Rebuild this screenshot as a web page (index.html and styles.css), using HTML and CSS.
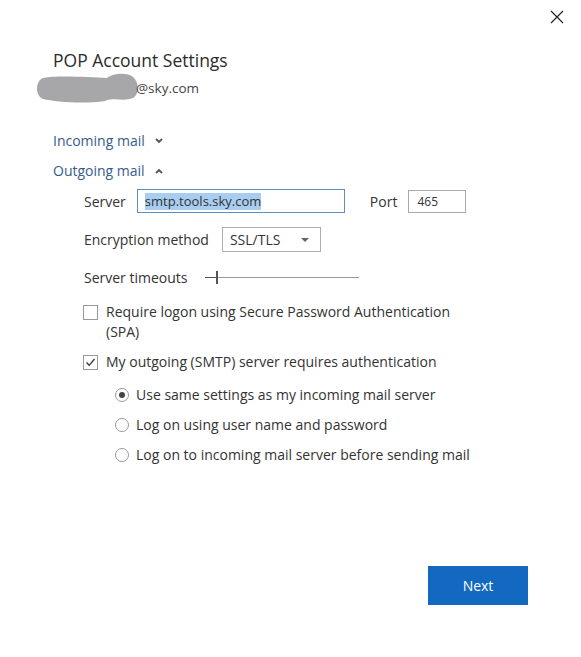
FILE: index.html
```html
<!DOCTYPE html>
<html>
<head>
<meta charset="utf-8">
<link rel="stylesheet" href="styles.css">
</head>
<body>
<div class="dialog">
  <div class="topbar">
    <svg class="close" width="14" height="14" viewBox="0 0 14 14"><path d="M1 1 L13 13 M13 1 L1 13" stroke="#222" stroke-width="1.2" fill="none"/></svg>
  </div>
  <div class="content">
    <h1 class="title">POP Account Settings</h1>
    <div class="email">
      <svg class="blob" width="104" height="30" viewBox="0 0 104 30"><path d="M8 5 C20 2 55 4 72 5 C78 0 92 -1 98 4 C104 9 105 21 98 25 C88 29 80 24 70 28 C50 31 20 29 8 26 C0 23 0 8 8 5 Z" fill="#a7a7a9"/></svg>
      <span class="domain">@sky.com</span>
    </div>
    <div class="section-link">Incoming mail <svg class="chev" width="8" height="6" viewBox="0 0 8 6"><path d="M1 1 L4 4 L7 1" stroke="#555" stroke-width="1.8" fill="none"/></svg></div>
    <div class="section-link second">Outgoing mail <svg class="chev" width="8" height="6" viewBox="0 0 8 6"><path d="M1 5 L4 2 L7 5" stroke="#555" stroke-width="1.8" fill="none"/></svg></div>

    <div class="form">
      <div class="row server-row">
        <span class="label">Server</span>
        <div class="input server-input"><span class="sel">smtp.tools.sky.com</span></div>
        <span class="label port-label">Port</span>
        <div class="input port-input">465</div>
      </div>
      <div class="row enc-row">
        <span class="label">Encryption method</span>
        <div class="select"><span>SSL/TLS</span><svg width="10" height="6" viewBox="0 0 10 6"><path d="M1 1 L9 1 L5 5 Z" fill="#666"/></svg></div>
      </div>
      <div class="row timeout-row">
        <span class="label">Server timeouts</span>
        <div class="slider"><span class="track-left"></span><span class="thumb"></span><span class="track"></span></div>
      </div>
      <div class="check first">
        <span class="box"></span>
        <span class="ctext">Require logon using Secure Password Authentication<br>(SPA)</span>
      </div>
      <div class="check checked">
        <span class="box"><svg width="13" height="13" viewBox="0 0 13 13"><path d="M2.5 6.5 L5.2 9.3 L10.5 3" stroke="#333" stroke-width="1.3" fill="none"/></svg></span>
        <span class="ctext">My outgoing (SMTP) server requires authentication</span>
      </div>
      <div class="radios">
        <div class="radio on"><span class="circle"><span class="dot"></span></span>Use same settings as my incoming mail server</div>
        <div class="radio"><span class="circle"></span>Log on using user name and password</div>
        <div class="radio"><span class="circle"></span>Log on to incoming mail server before sending mail</div>
      </div>
    </div>
  </div>
  <div class="footer">
    <button class="next">Next</button>
  </div>
</div>
</body>
</html>
```
FILE: styles.css
```css
html, body {
  margin: 0;
  padding: 0;
  background: #fff;
}
body {
  font-family: "Open Sans", "Noto Sans", sans-serif;
  color: #333;
  width: 581px;
  height: 657px;
  overflow: hidden;
}
.dialog {
  display: flex;
  flex-direction: column;
  height: 657px;
}
.topbar {
  display: flex;
  justify-content: flex-end;
  padding: 10px 17px 0 0;
  height: 14px;
}
.close { display: block; }
.content {
  padding-left: 53px;
}
.title {
  margin: 24px 0 0 0;
  font-weight: 400;
  font-size: 17.5px;
  line-height: 24px;
  color: #2b2b2b;
}
.email {
  display: flex;
  align-items: center;
  margin-left: -18px;
  height: 30px;
  margin-top: 1px;
}
.blob { display: block; }
.domain {
  font-size: 13.5px;
  color: #444;
  margin-left: -3px;
  margin-top: 0;
}
.section-link {
  margin-top: 28px;
  font-size: 14px;
  line-height: 20px;
  color: #365c8b;
  display: flex;
  align-items: center;
}
.section-link.second { margin-top: 10px; }
.chev { margin-left: 10px; }
.form {
  padding-left: 31px;
  font-size: 14px;
  color: #333;
}
.row {
  display: flex;
  align-items: center;
}
.label { white-space: nowrap; }
.server-row { margin-top: 8px; height: 24px; }
.input {
  border: 1px solid #a9a9a9;
  height: 21px;
  box-sizing: border-box;
  font-size: 12.5px;
  display: flex;
  align-items: center;
}
.server-input {
  width: 208px;
  height: 24px;
  margin-left: 11px;
  border-color: #5f8fbf;
  padding-left: 7px;
}
.sel {
  background: #a8cdf0;
  color: #333;
  line-height: 17px;
  font-size: 13px;
}
.port-label { margin-left: 25px; }
.port-input {
  width: 58px;
  height: 23px;
  margin-left: 11px;
  padding-left: 8px;
  font-size: 12px;
}
.enc-row { margin-top: 14px; }
.select {
  margin-left: 13px;
  width: 99px;
  height: 25px;
  box-sizing: border-box;
  border: 1px solid #adadad;
  display: flex;
  align-items: center;
  justify-content: space-between;
  padding: 0 10px 0 7px;
  font-size: 14px;
}
.timeout-row { margin-top: 16px; }
.slider {
  display: flex;
  align-items: center;
  margin-left: 17px;
  height: 14px;
}
.track-left { width: 11px; height: 1px; background: #555; }
.thumb { width: 2px; height: 13px; background: #555; }
.track { width: 141px; height: 1px; background: #999; }
.check {
  display: flex;
  align-items: flex-start;
  margin-left: -1px;
  line-height: 20px;
}
.check .box {
  width: 13px;
  height: 13px;
  border: 1px solid #999;
  flex: none;
  margin-top: 3px;
  margin-right: 8px;
}
.check .box svg { display: block; }
.check.first { margin-top: 15px; }
.check.checked { margin-top: 10px; }
.radios {
  padding-left: 31px;
  margin-top: 13px;
}
.radio {
  display: flex;
  align-items: center;
  line-height: 20px;
  margin-bottom: 10px;
}
.circle {
  width: 12px;
  height: 12px;
  border: 1px solid #999;
  border-radius: 50%;
  margin-right: 7px;
  display: flex;
  align-items: center;
  justify-content: center;
  flex: none;
}
.dot { width: 6px; height: 6px; border-radius: 50%; background: #444; }
.footer {
  margin-top: auto;
  display: flex;
  justify-content: flex-end;
  padding: 0 53px 52px 0;
}
.next {
  width: 100px;
  height: 39px;
  border: none;
  background: #1368bf;
  color: #fff;
  font-family: inherit;
  font-size: 14px;
  padding: 0;
}
```
